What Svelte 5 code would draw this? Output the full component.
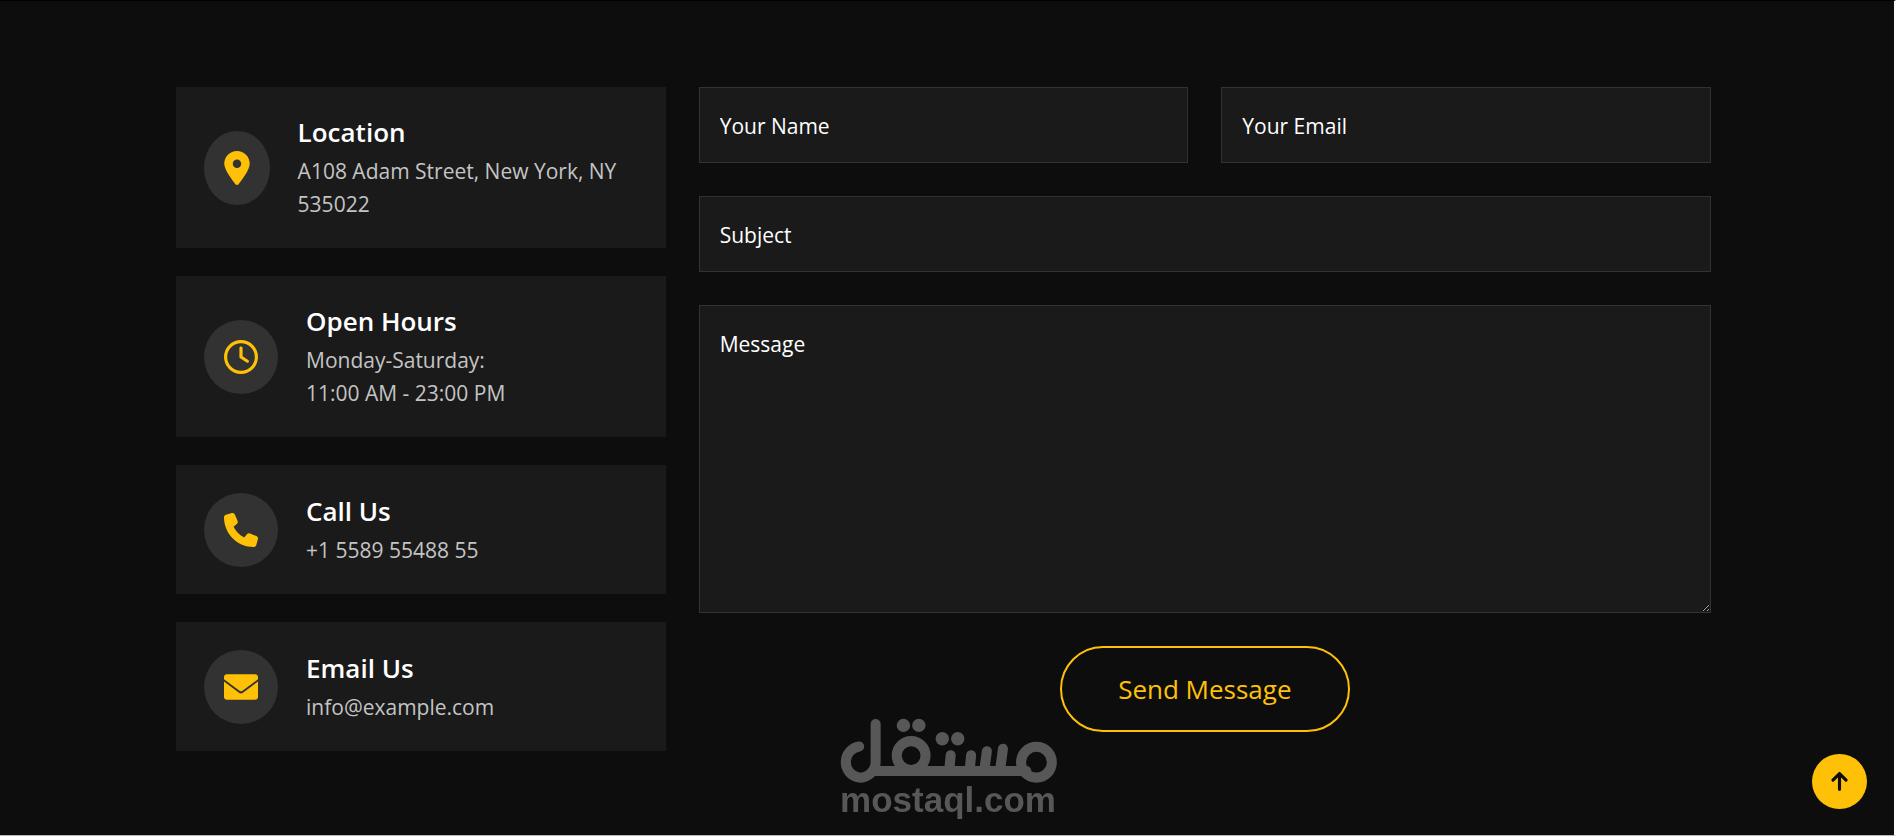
<script lang="ts">
  const icons = {
    location: {
      viewBox: '-64 0 512 512',
      path: 'M215.7 499.2C267 435 384 279.4 384 192C384 86 298 0 192 0S0 86 0 192c0 87.4 117 243 168.3 307.2c12.3 15.3 35.1 15.3 47.4 0zM192 128a64 64 0 1 1 0 128 64 64 0 1 1 0-128z',
    },
    clock: {
      viewBox: '0 0 512 512',
      path: 'M464 256A208 208 0 1 1 48 256a208 208 0 1 1 416 0zM0 256a256 256 0 1 0 512 0A256 256 0 1 0 0 256zM232 120V256c0 8 4 15.5 10.7 20l96 64c11 7.4 25.9 4.4 33.3-6.7s4.4-25.9-6.7-33.3L280 243.2V120c0-13.3-10.7-24-24-24s-24 10.7-24 24z',
    },
    phone: {
      viewBox: '0 0 512 512',
      path: 'M164.9 24.6c-7.7-18.6-28-28.5-47.4-23.2l-88 24C12.1 30.2 0 46 0 64C0 311.4 200.6 512 448 512c18 0 33.8-12.1 38.6-29.5l24-88c5.3-19.4-4.6-39.7-23.2-47.4l-96-40c-16.3-6.8-35.2-2.1-46.3 11.6L304.7 368C234.3 334.7 177.3 277.7 144 207.3L193.3 167c13.7-11.2 18.4-30 11.6-46.3l-40-96z',
    },
    envelope: {
      viewBox: '0 0 16 16',
      path: 'M1.5 2h13A1.5 1.5 0 0 1 16 3.5v.8L8.7 9.8a1.2 1.2 0 0 1-1.4 0L0 4.3v-.8A1.5 1.5 0 0 1 1.5 2zM0 5.4l6.9 5.2a1.8 1.8 0 0 0 2.2 0L16 5.4V12.5a1.5 1.5 0 0 1-1.5 1.5H1.5A1.5 1.5 0 0 1 0 12.5z',
    },
  };

  const contactInfo = [
    { icon: icons.location, title: 'Location', lines: ['A108 Adam Street, New York, NY 535022'] },
    { icon: icons.clock, title: 'Open Hours', lines: ['Monday-Saturday:', '11:00 AM - 23:00 PM'] },
    { icon: icons.phone, title: 'Call Us', lines: ['+1 5589 55488 55'] },
    { icon: icons.envelope, title: 'Email Us', lines: ['info@example.com'] },
  ];

  let name = $state('');
  let email = $state('');
  let subject = $state('');
  let message = $state('');

  function handleSubmit(event: SubmitEvent) {
    event.preventDefault();
  }

  function scrollToTop() {
    window.scrollTo({ top: 0, behavior: 'smooth' });
  }
</script>

<svelte:head>
  <title>Contact</title>
</svelte:head>

<main class="contact">
  <div class="container">
    <div class="info-list">
      {#each contactInfo as item}
        <section class="info-item">
          <div class="info-icon">
            <svg viewBox={item.icon.viewBox} aria-hidden="true"><path d={item.icon.path} /></svg>
          </div>
          <div class="info-text">
            <h3>{item.title}</h3>
            {#each item.lines as line}
              <p>{line}</p>
            {/each}
          </div>
        </section>
      {/each}
    </div>

    <form onsubmit={handleSubmit}>
      <input type="text" placeholder="Your Name" aria-label="Your Name" bind:value={name} />
      <input type="email" placeholder="Your Email" aria-label="Your Email" bind:value={email} />
      <input
        class="wide"
        type="text"
        placeholder="Subject"
        aria-label="Subject"
        bind:value={subject}
      />
      <textarea class="wide" placeholder="Message" aria-label="Message" bind:value={message}
      ></textarea>
      <button type="submit" class="send-btn wide">Send Message</button>
    </form>
  </div>

  <div class="watermark">
    <svg viewBox="3 262 656 200" role="img" aria-label="مستقل">
      <g fill="none" stroke-width="30" stroke-linecap="round">
        <path d="M66 350A47 47 0 0 0 66 443C93 443 115 422 115 396V283" />
        <path d="M110 423H565" />
        <circle cx="221" cy="377" r="43" />
        <path d="M339 376l-4 41M400 376l-4 41M447 364l-7 53M495 357l-8 60" />
        <circle cx="595" cy="397" r="46" />
      </g>
      <g stroke="none">
        <circle cx="198" cy="287" r="20" />
        <circle cx="244" cy="287" r="20" />
        <circle cx="314" cy="327" r="20" />
        <circle cx="360" cy="327" r="20" />
      </g>
    </svg>
    <span>mostaql.com</span>
  </div>

  <button type="button" class="scroll-top" aria-label="Back to top" onclick={scrollToTop}>
    <svg viewBox="0 0 16 16" aria-hidden="true">
      <path d="M8 13V3M3.8 7.1 8 2.9l4.2 4.2" />
    </svg>
  </button>
</main>

<style>
  :global(body) {
    background: #0d0d0d;
  }

  .contact {
    box-sizing: border-box;
    min-height: 100vh;
    padding: 86px 7px 80px 0;
    border-top: 1px solid #000;
    border-right: 2px solid #fff;
    border-bottom: 1px solid #b9b7b8;
    background: #0d0d0d;
    color: #c4c4c4;
    font-family: 'Segoe UI', 'Open Sans', 'Noto Sans', sans-serif;
    font-size: 21px;
    line-height: 33px;
  }

  .container {
    display: grid;
    grid-template-columns: repeat(3, 1fr);
    gap: 33px;
    max-width: 1535px;
    margin: 0 auto;
  }

  .info-list {
    display: flex;
    flex-direction: column;
    gap: 28px;
  }

  .info-item {
    display: flex;
    align-items: center;
    padding: 28px 28px 27px;
    background: #1a1a1a;
  }

  .info-icon {
    display: flex;
    flex: 0 0.8 74px;
    align-items: center;
    justify-content: center;
    height: 74px;
    margin-right: 28px;
    border-radius: 50%;
    background: #323232;
  }

  .info-icon svg {
    flex: none;
    width: 34px;
    height: 34px;
    fill: #ffc107;
  }

  h3 {
    margin: 0 0 6px;
    color: #fff;
    font-size: 26px;
    font-weight: 600;
    line-height: 34px;
  }

  p {
    margin: 0;
  }

  form {
    display: grid;
    grid-column: span 2;
    grid-template-columns: 1fr 1fr;
    align-content: start;
    gap: 33px;
  }

  .wide {
    grid-column: 1 / -1;
  }

  input,
  textarea {
    box-sizing: border-box;
    width: 100%;
    height: 76px;
    padding: 22px 20px 20px;
    border: 1px solid #323232;
    border-radius: 0;
    background: #1a1a1a;
    color: #fff;
    font: inherit;
  }

  textarea {
    display: block;
    height: 308px;
    color-scheme: dark;
    resize: vertical;
  }

  input::placeholder,
  textarea::placeholder {
    color: #fff;
    opacity: 1;
  }

  .send-btn {
    justify-self: center;
    padding: 24px 56px;
    border: 2px solid #ffc107;
    border-radius: 50px;
    background: transparent;
    color: #ffc107;
    font: inherit;
    font-size: 26px;
    line-height: 34px;
    cursor: pointer;
  }

  .send-btn:hover {
    background: #ffc107;
    color: #0d0d0d;
  }

  .watermark {
    position: fixed;
    bottom: 20px;
    left: 50%;
    display: flex;
    flex-direction: column;
    align-items: center;
    width: 220px;
    margin-left: -110px;
    color: #575757;
    font-family: 'Liberation Sans', Arial, sans-serif;
    font-size: 35px;
    font-weight: 700;
    line-height: 32px;
    pointer-events: none;
  }

  .watermark svg {
    width: 220px;
    height: 67px;
    fill: currentColor;
    stroke: currentColor;
  }

  .scroll-top {
    position: fixed;
    right: 29px;
    bottom: 27px;
    display: flex;
    align-items: center;
    justify-content: center;
    width: 55px;
    height: 55px;
    padding: 0;
    border: 0;
    border-radius: 50%;
    background: #ffc107;
    cursor: pointer;
  }

  .scroll-top svg {
    width: 25px;
    height: 25px;
    fill: none;
    stroke: #0d0d0d;
    stroke-width: 2;
    stroke-linecap: round;
    stroke-linejoin: round;
  }
</style>
